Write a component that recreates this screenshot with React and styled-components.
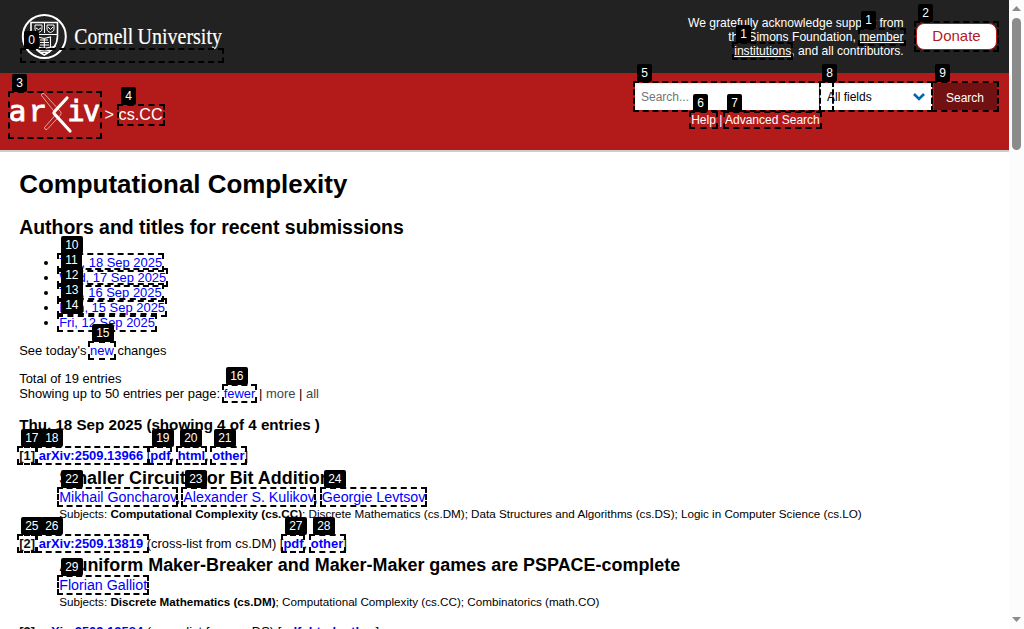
import React from 'react';
import styled, { createGlobalStyle } from 'styled-components';

const Global = createGlobalStyle`
  * { box-sizing: border-box; }
  body { margin: 0; overflow: hidden; background: #fff; color: #000;
    font-family: "Liberation Sans", Arial, sans-serif; font-size: 12.96px; }
  a { color: #0000ff; text-decoration: none; }
  svg { overflow: visible; }
`;
const Viewport = styled.div`display: flex; width: 1024px; height: 629px; overflow: hidden; position: relative;`;
const Page = styled.div`width: 1009px; height: 629px; overflow: hidden; flex: none;`;

const CornellBar = styled.header`
  height: 73px; background: #222; display: flex; justify-content: space-between; padding: 13px 12px 0 21px;
`;
const Support = styled.div`display: flex; gap: 12.4px;`;
const Thanks = styled.p`
  margin: 3px 0 0; width: 226px; text-align: right; color: #fff; font-size: 12.1px; line-height: 14px; white-space: nowrap;
  a { color: #fff; text-decoration: underline; }
`;
const Donate = styled.button`
  margin-top: 10px; width: 81px; height: 27px; padding: 0 0 2px; background: #fff; color: #b31b1b;
  border: 1px solid #b31b1b; border-radius: 8px; font: 15px "Liberation Sans", sans-serif;
`;
const RedBar = styled.div`
  height: 79px; background: #b31b1b; border-bottom: 2px solid #ccc; display: flex; justify-content: space-between;
  padding: 10px 12px 0 9px;
`;
const Crumbs = styled.div`
  display: flex; align-items: flex-start; color: #fff; font-size: 16.2px; line-height: 20px;
  a { color: #fff; }
  svg { margin-top: 10px; }
  span { margin: 21px 0 0 3.6px; }
`;
const SearchForm = styled.form`width: 362px;`;
const Fields = styled.div`display: flex; height: 27px;`;
const Input = styled.div`
  width: 184px; background: #fff; color: #757575; font-size: 12px; line-height: 28px; padding-left: 6px;
  box-shadow: inset 0 1px 2px rgba(10, 10, 10, .1);
`;
const Select = styled.div`
  width: 112px; margin-left: 1px; background: #fff; color: #000; font-size: 12px; line-height: 28px; padding: 0 7px;
  display: flex; justify-content: space-between; align-items: center; box-shadow: inset 0 1px 2px rgba(10, 10, 10, .1);
`;
const SearchButton = styled.button`
  width: 63px; margin-left: 2px; border: 0; padding: 2px 1px 0 0; background: #711111; color: #fff;
  font: 12px "Liberation Sans", sans-serif; text-align: center;
`;
const HelpLinks = styled.div`
  margin: 3px 0 0 56.2px; color: #fff; font-size: 12px; line-height: 14px; a { color: #fff; }
`;

const Content = styled.main`padding: 16px 0 0 19.2px; white-space: nowrap;`;
const H1 = styled.h1`margin: 0; font-size: 25.92px; line-height: 32px;`;
const H2 = styled.h2`margin: 15px 0 0; font-size: 19.44px; line-height: 24px;`;
const Dates = styled.ul`margin: 16px 0 0; padding-left: 40px; line-height: 15px;`;
const Para = styled.p`margin: 13px 0 0; line-height: 15px;`;
const Muted = styled.span`color: #454545;`;
const H3 = styled.h3`margin: 15px 0 0; font-size: 15.16px; line-height: 18px;`;
const Entries = styled.div`margin-top: 14.15px;`;
const Entry = styled.article`height: 87.9px;`;
const Ids = styled.div`line-height: 15px; a { font-weight: bold; }`;
const Index = styled.b`color: #111;`;
const Meta = styled.div`padding-left: 40px;`;
const Title = styled.div`margin-top: 3.4px; font-weight: bold; font-size: 17.96px; line-height: 22px;`;
const Authors = styled.div`margin-top: .4px; font-size: 14.26px; line-height: 17px;`;
const Subjects = styled.div`margin-top: 1px; font-size: 11.66px; line-height: 13px;`;

const Track = styled.div`
  width: 15px; background: #fcfcfc; display: flex; flex-direction: column; align-items: center; padding: 6px 0 7px;
`;
const Thumb = styled.div`width: 9px; height: 132px; margin-top: 7px; border-radius: 5px; background: #8b8b8b; flex: none;`;
const Down = styled.div`margin-top: auto; display: flex;`;

const Outline = styled.div`
  position: absolute; left: ${p => p.$b[0]}px; top: ${p => p.$b[1]}px; width: ${p => p.$b[2]}px; height: ${p => p.$b[3]}px;
  border: 2px dashed #000;
`;
const Badge = styled.div`
  position: absolute; left: ${p => p.$x}px; top: ${p => p.$y}px; min-width: 15px; height: 18px; padding: 0 4.200px;
  border-radius: 2px; background: #000; color: #fff; font-size: 12px; line-height: 18px; text-align: center;
`;

// label, [left, top, width, height] of the outline, [left, top] of the badge
const marks = [
  [0, [20, 48, 204, 15], [24, 31]],
  [1, [858, 28, 48, 18], [861, 11]],
  [1, [732, 42, 61, 18], [736, 25]],
  [2, [914, 21, 85, 31], [918, 4]],
  [3, [8, 91, 94, 48], [12, 74]],
  [4, [117, 104, 48, 22], [121, 87]],
  [5, [633, 81, 201, 31], [637, 64]],
  [6, [689, 111, 29, 18], [693, 94]],
  [7, [723, 111, 99, 18], [727, 94]],
  [8, [819, 81, 114, 31], [822, 64]],
  [9, [931, 81, 68, 31], [935, 64]],
  [10, [57, 253, 107, 19], [61, 236]],
  [11, [57, 268, 111, 19], [61, 251]],
  [12, [57, 283, 107, 19], [61, 266]],
  [13, [57, 298, 110, 19], [61, 281]],
  [14, [57, 313, 100, 19], [61, 296]],
  [15, [88, 341, 28, 19], [92, 324]],
  [16, [222, 384, 35, 19], [226, 367]],
  [17, [17, 446, 20, 19], [21, 429]],
  [18, [36, 446, 113, 19], [41, 429]],
  [19, [148, 446, 24, 19], [152, 429]],
  [20, [176, 446, 31, 19], [180, 429]],
  [21, [210, 446, 37, 19], [214, 429]],
  [22, [57, 487, 121, 20], [61, 470]],
  [23, [181, 487, 135, 20], [185, 470]],
  [24, [320, 487, 107, 20], [324, 470]],
  [25, [17, 534, 20, 19], [21, 517]],
  [26, [36, 534, 113, 19], [41, 517]],
  [27, [281, 534, 24, 19], [285, 517]],
  [28, [309, 534, 37, 19], [313, 517]],
  [29, [57, 575, 92, 20], [61, 558]],
];

const CornellLogo = () => (
  <svg width="205" height="48" viewBox="21 13 205 48" fill="none" stroke="#fff">
    <circle cx="44.3" cy="36.5" r="21.5" strokeWidth="2" />
    <path d="M31 22.5H57.5V36C57.5 46 52 51 44.3 55C36.5 51 31 46 31 36Z" strokeWidth="1.6" />
    <path d="M31.5 34.5H57M35 25h7v4c0 2-2 3-3.500 3.500c-2-.5-3.500-1.500-3.500-3.500zM47 25h7v4c0 2-2 3-3.500 3.500c-2-.5-3.500-1.500-3.500-3.500zM36 28l2.500 1.500 2.500-1.500M48 27l2.500 2.500 2.500-2.500M44.500 23v10" strokeWidth="1" />
    <path d="M38 37l6 1.500 6.500-1.500v10l-6.500 1.500-6-1.500zM44.300 38v10M40 40h8M40 42.500h9M40 45h9M33 46q11 4 23 0M35 49q9 4 19 0M39 52q5 1 11 0" strokeWidth="1.1" />
    <g fill="#fff" strokeWidth=".2" fontFamily="Liberation Serif, serif" fontSize="22.5">
      <text x="74.300" y="44" textLength="59" lengthAdjust="spacingAndGlyphs">Cornell</text>
      <text x="137.500" y="44" textLength="84.500" lengthAdjust="spacingAndGlyphs">University</text>
    </g>
  </svg>
);

const ArxivLogo = () => (
  <svg width="92" height="44" viewBox="9 93 92 44">
    <g fill="#fff" stroke="#fff" strokeWidth=".9" fontFamily="DejaVu Sans Mono, monospace" fontSize="29">
      <text x="8.700" y="120.500">a</text>
      <text x="29" y="120.500" fontFamily="Liberation Mono, monospace" fontSize="30">r</text>
      <text x="67.300" y="120.500">i</text>
      <text x="82.800" y="120.500">v</text>
    </g>
    <g fill="none" stroke="#fff" strokeLinecap="round">
      <path d="M53 110L41.500 95.500q-.5-2.500 2.500-2L60.500 111.500q1.500 2 0 3.500L47 129.500q-2.500.500-2.500-2L54.500 116" strokeWidth=".6" />
      <path d="M67 98L54.500 111.500q-1 1.200 0 2.500L70 131" strokeWidth="3.200" />
    </g>
  </svg>
);

const Links = ({ names, sep = ', ' }) => names.map((n, i) => (
  <React.Fragment key={n}>{i > 0 && sep}<a href="#">{n}</a></React.Fragment>
));

const dates = ['Thu, 18 Sep 2025', 'Wed, 17 Sep 2025', 'Tue, 16 Sep 2025', 'Mon, 15 Sep 2025', 'Fri, 12 Sep 2025'];

const entries = [
  { id: 'arXiv:2509.13966', links: ['pdf', 'html', 'other'], title: 'Smaller Circuits for Bit Addition',
    authors: ['Mikhail Goncharov', 'Alexander S. Kulikov', 'Georgie Levtsov'], primary: 'Computational Complexity (cs.CC)',
    rest: '; Discrete Mathematics (cs.DM); Data Structures and Algorithms (cs.DS); Logic in Computer Science (cs.LO)' },
  { id: 'arXiv:2509.13819', cross: '(cross-list from cs.DM) ', links: ['pdf', 'other'],
    title: 'A uniform Maker-Breaker and Maker-Maker games are PSPACE-complete', authors: ['Florian Galliot'],
    primary: 'Discrete Mathematics (cs.DM)', rest: '; Computational Complexity (cs.CC); Combinatorics (math.CO)' },
  { id: 'arXiv:2509.13584', cross: '(cross-list from cs.DS) ', links: ['pdf', 'html', 'other'] },
];

export default function App() {
  return (
    <Viewport>
      <Global />
      <Page>
        <CornellBar>
          <CornellLogo />
          <Support>
            <Thanks>We gratefully acknowledge support from<br />the Simons Foundation, <a href="#">member<br />institutions</a>, and all contributors.</Thanks>
            <Donate>Donate</Donate>
          </Support>
        </CornellBar>
        <RedBar>
          <Crumbs><ArxivLogo /><span>&gt; <a href="#">cs.CC</a></span></Crumbs>
          <SearchForm>
            <Fields>
              <Input>Search...</Input>
              <Select>All fields
                <svg width="12" height="8" viewBox="0 0 12 8" fill="none" stroke="#0068ac" strokeWidth="2.600"><path d="M1 1l5 5 5-5" /></svg>
              </Select>
              <SearchButton type="button">Search</SearchButton>
            </Fields>
            <HelpLinks><a href="#">Help</a> | <a href="#">Advanced Search</a></HelpLinks>
          </SearchForm>
        </RedBar>
        <Content>
          <H1>Computational Complexity</H1>
          <H2>Authors and titles for recent submissions</H2>
          <Dates>{dates.map(d => <li key={d}><a href="#">{d}</a></li>)}</Dates>
          <Para>See today's <a href="#">new</a> changes</Para>
          <Para>Total of 19 entries<br />Showing up to 50 entries per page: <a href="#">fewer</a> | <Muted>more</Muted> | <Muted>all</Muted></Para>
          <H3>Thu, 18 Sep 2025 (showing 4 of 4 entries )</H3>
          <Entries>
            {entries.map((e, i) => (
              <Entry key={e.id}>
                <Ids><Index>[{i + 1}]</Index> <a href="#">{e.id}</a> {e.cross}[<Links names={e.links} />]</Ids>
                {e.title && <Meta>
                  <Title>{e.title}</Title>
                  <Authors><Links names={e.authors} /></Authors>
                  <Subjects>Subjects: <b>{e.primary}</b>{e.rest}</Subjects>
                </Meta>}
              </Entry>
            ))}
          </Entries>
        </Content>
      </Page>
      <Track>
        <svg width="9" height="5" viewBox="0 0 9 5"><path d="M0 5L4.500 0L9 5z" fill="#8b8b8b" /></svg>
        <Thumb />
        <Down><svg width="9" height="5" viewBox="0 0 9 5"><path d="M0 0L4.500 5L9 0z" fill="#8b8b8b" /></svg></Down>
      </Track>
      {marks.map(([n, box], i) => <Outline key={i} $b={box} />)}
      {marks.map(([n, , at], i) => <Badge key={i} $x={at[0]} $y={at[1]}>{n}</Badge>)}
    </Viewport>
  );
}
